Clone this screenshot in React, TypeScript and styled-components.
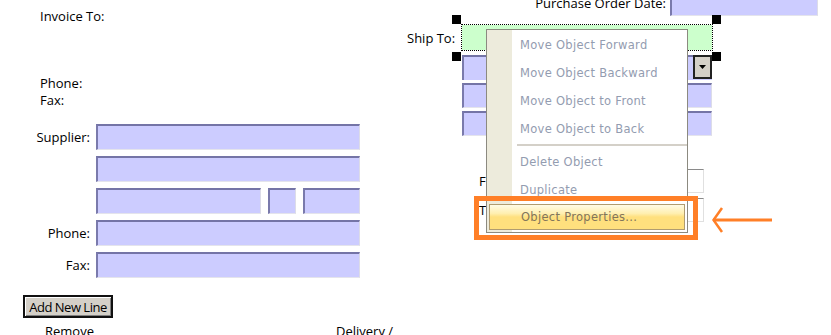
import React from 'react'
import styled, { createGlobalStyle } from 'styled-components'

const GlobalStyle = createGlobalStyle`
  html, body {
    margin: 0;
    padding: 0;
    background: #ffffff;
  }
`

const menuItems = [
  'Move Object Forward',
  'Move Object Backward',
  'Move Object to Front',
  'Move Object to Back',
]

const menuItems2 = ['Delete Object', 'Duplicate']

const App: React.FC = () => {
  return (
    <>
      <GlobalStyle />
      <StyledPage>
        <StyledLeft>
          <StyledText>Invoice To:</StyledText>
          <StyledContact>
            <StyledText>Phone:</StyledText>
            <StyledText>Fax:</StyledText>
          </StyledContact>
          <StyledFormGrid>
            <StyledLabel>Supplier:</StyledLabel>
            <StyledField />
            <span />
            <StyledField />
            <span />
            <StyledSplit>
              <StyledField w={165} />
              <StyledField w={28} />
              <StyledField w={57} />
            </StyledSplit>
            <StyledLabel>Phone:</StyledLabel>
            <StyledField />
            <StyledLabel>Fax:</StyledLabel>
            <StyledField />
          </StyledFormGrid>
          <StyledButton>Add New Line</StyledButton>
          <StyledHeaderRow>
            <StyledText>Remove</StyledText>
            <StyledText>Delivery /</StyledText>
          </StyledHeaderRow>
        </StyledLeft>

        <StyledRight>
          <StyledDateRow>
            <StyledText>Purchase Order Date:</StyledText>
            <StyledField w={148} />
          </StyledDateRow>
          <StyledShipRow>
            <StyledShipLabel>Ship To:</StyledShipLabel>
            <StyledShipFields>
              <StyledSelected>
                <StyledHandle x={-10} y={-10} />
                <StyledHandle x={250} y={-10} />
                <StyledHandle x={-10} y={27} />
                <StyledHandle x={250} y={27} />
              </StyledSelected>
              <StyledComboField>
                <StyledDropButton>
                  <svg width="7" height="4" viewBox="0 0 7 4">
                    <path d="M0 0h7L3.5 4z" fill="#000" />
                  </svg>
                </StyledDropButton>
              </StyledComboField>
              <StyledField />
              <StyledField />
            </StyledShipFields>
          </StyledShipRow>
          <StyledSmallRows>
            <StyledSmallRow>
              <StyledText>F</StyledText>
              <StyledWhiteField />
            </StyledSmallRow>
            <StyledSmallRow>
              <StyledText>T</StyledText>
              <StyledWhiteField />
            </StyledSmallRow>
          </StyledSmallRows>
        </StyledRight>

        <StyledMenu>
          <StyledMenuStrip />
          <StyledMenuList>
            {menuItems.map((item) => (
              <StyledMenuItem key={item}>{item}</StyledMenuItem>
            ))}
            <StyledSeparator />
            {menuItems2.map((item) => (
              <StyledMenuItem key={item}>{item}</StyledMenuItem>
            ))}
            <StyledMenuItem active>Object Properties...</StyledMenuItem>
          </StyledMenuList>
        </StyledMenu>

        <StyledCallout />
        <StyledArrow width="62" height="30" viewBox="0 0 62 30">
          <path d="M1 14h59" stroke="#ff7f27" strokeWidth="3" />
          <path d="M10 2L1.5 14 10 26" stroke="#ff7f27" strokeWidth="2.5" fill="none" />
        </StyledArrow>
      </StyledPage>
    </>
  )
}

const StyledPage = styled.div`
  position: relative;
  width: 831px;
  height: 335px;
  overflow: hidden;
  display: flex;
  font-family: 'Open Sans', 'Noto Sans', sans-serif;
  font-size: 13px;
  color: #000;
`

const StyledText = styled.span`
  display: block;
  line-height: 16px;
  white-space: nowrap;
`

const StyledLeft = styled.div`
  width: 400px;
  flex-shrink: 0;
  box-sizing: border-box;
  padding-top: 8px;
  padding-left: 40px;
`

const StyledContact = styled.div`
  margin-top: 51px;
  display: flex;
  flex-direction: column;
  gap: 1px;
`

const StyledFormGrid = styled.div`
  margin-top: 16px;
  margin-left: -40px;
  display: grid;
  grid-template-columns: 90px 264px;
  grid-auto-rows: 26px;
  column-gap: 6px;
  row-gap: 6px;
`

const StyledLabel = styled.span`
  text-align: right;
  line-height: 26px;
  white-space: nowrap;
`

const StyledField = styled.div<{ w?: number }>`
  box-sizing: border-box;
  height: 26px;
  width: ${(p) => (p.w ? `${p.w}px` : 'auto')};
  flex-shrink: 0;
  background: #ccccff;
  border-style: solid;
  border-width: 2px 1px 1px 2px;
  border-color: #7474a6 #dcdce8 #e4e4ec #7a7aac;
`

const StyledSplit = styled.div`
  display: flex;
  gap: 7px;
`

const StyledButton = styled.button`
  display: block;
  margin: 17px 0 0 -17px;
  width: 90px;
  height: 23px;
  padding: 0;
  box-sizing: border-box;
  background: #d4d0c8;
  border: 2px solid #111;
  box-shadow: inset 1px 1px #ffffff, inset -1px -1px #808080;
  font-family: 'Open Sans', 'Noto Sans', sans-serif;
  font-size: 13px;
  letter-spacing: -0.5px;
  color: #000;
`

const StyledHeaderRow = styled.div`
  margin-top: 5px;
  margin-left: 5px;
  display: flex;
  gap: 242px;
`

const StyledRight = styled.div`
  flex: 1;
`

const StyledDateRow = styled.div`
  margin-top: -10px;
  padding-right: 13px;
  display: flex;
  justify-content: flex-end;
  align-items: flex-end;
  gap: 4px;
  ${StyledText} {
    margin-bottom: 5px;
  }
`

const StyledShipRow = styled.div`
  margin-top: 9px;
  display: flex;
`

const StyledShipLabel = styled.span`
  width: 62px;
  box-sizing: border-box;
  padding-left: 7px;
  line-height: 26px;
  white-space: nowrap;
`

const StyledShipFields = styled.div`
  width: 250px;
  display: flex;
  flex-direction: column;
  gap: 3px;
  ${StyledField} {
    height: 25px;
  }
`

const StyledSelected = styled.div`
  position: relative;
  height: 25px;
  margin-bottom: 2px;
  background: #ccffcc;
  outline: 1px dotted #000;
`

const StyledHandle = styled.span<{ x: number; y: number }>`
  position: absolute;
  left: ${(p) => p.x}px;
  top: ${(p) => p.y}px;
  width: 9px;
  height: 9px;
  background: #000;
`

const StyledComboField = styled(StyledField)`
  display: flex;
  justify-content: flex-end;
  border-right: none;
  border-bottom: none;
`

const StyledDropButton = styled.span`
  box-sizing: border-box;
  width: 19px;
  margin-top: -2px;
  height: 24px;
  display: flex;
  align-items: center;
  justify-content: center;
  background: #d4d0c8;
  border: 2px solid #222;
`

const StyledSmallRows = styled.div`
  margin-top: 33px;
  padding-left: 79px;
  width: 304px;
  box-sizing: border-box;
  display: flex;
  flex-direction: column;
  gap: 5px;
`

const StyledSmallRow = styled.div`
  display: flex;
  align-items: center;
  gap: 12px;
`

const StyledWhiteField = styled.div`
  flex: 1;
  height: 24px;
  box-sizing: border-box;
  background: #fff;
  border-style: solid;
  border-width: 1px;
  border-color: #8a8a8a #e0e0e0 #e0e0e0 #8a8a8a;
`

const StyledMenu = styled.div`
  position: absolute;
  left: 486px;
  top: 29px;
  width: 202px;
  height: 204px;
  box-sizing: border-box;
  display: flex;
  background: #ffffff;
  border: 1px solid #8c8a80;
`

const StyledMenuStrip = styled.div`
  position: absolute;
  left: 0;
  top: 0;
  bottom: 0;
  width: 25px;
  background: #edebdc;
`

const StyledMenuList = styled.div`
  position: relative;
  flex: 1;
  display: flex;
  flex-direction: column;
  padding-top: 1px;
  font-family: 'DejaVu Sans', 'Noto Sans', sans-serif;
  font-size: 11.5px;
  letter-spacing: 0.3px;
`

const StyledMenuItem = styled.div<{ active?: boolean }>`
  height: 28px;
  box-sizing: border-box;
  display: flex;
  align-items: center;
  padding-left: 33px;
  color: ${(p) => (p.active ? '#83755a' : '#939cb0')};
  white-space: nowrap;
  ${(p) =>
    p.active &&
    `
    margin: 0 2px 2px 2px;
    height: 26px;
    padding-left: 31px;
    border: 1px solid #b09c70;
    background: linear-gradient(#fffbe6 0%, #ffefb0 35%, #ffe07e 50%, #ffe07e 100%);
  `}
`

const StyledSeparator = styled.div`
  margin: 1px 0 2px 30px;
  height: 2px;
  background: #d4d0c8;
`

const StyledCallout = styled.div`
  position: absolute;
  left: 474px;
  top: 196px;
  width: 224px;
  height: 44px;
  box-sizing: border-box;
  border: 5px solid #ff7f27;
`

const StyledArrow = styled.svg`
  position: absolute;
  left: 712px;
  top: 206px;
`

export default App
